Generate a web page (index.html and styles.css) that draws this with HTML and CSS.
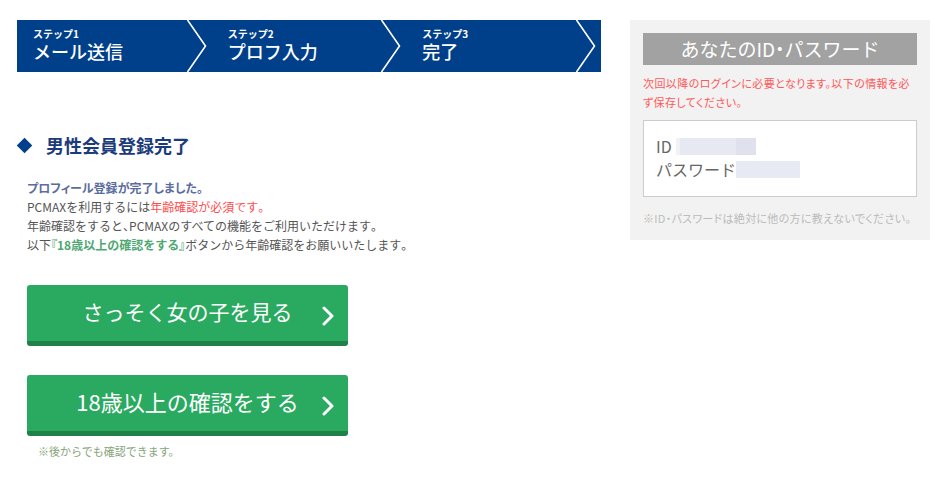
FILE: index.html
```html
<!DOCTYPE html>
<html lang="ja">
<head>
<meta charset="utf-8">
<title>男性会員登録完了</title>
<link rel="stylesheet" href="styles.css">
</head>
<body>
<div class="page">
  <main class="main">
    <ol class="steps">
      <li class="step">
        <div class="step-text"><span class="step-num">ステップ1</span><span class="step-name">メール送信</span></div>
        <svg class="chev" width="22" height="52" viewBox="0 0 22 52"><polyline points="0.5,0 18.5,26 0.5,52" fill="none" stroke="#fff" stroke-width="1.6"/></svg>
      </li>
      <li class="step">
        <div class="step-text"><span class="step-num">ステップ2</span><span class="step-name">プロフ入力</span></div>
        <svg class="chev" width="22" height="52" viewBox="0 0 22 52"><polyline points="0.5,0 18.5,26 0.5,52" fill="none" stroke="#fff" stroke-width="1.6"/></svg>
      </li>
      <li class="step">
        <div class="step-text"><span class="step-num">ステップ3</span><span class="step-name">完了</span></div>
        <svg class="chev" width="22" height="52" viewBox="0 0 22 52"><polyline points="0.5,0 18.5,26 0.5,52" fill="none" stroke="#fff" stroke-width="1.6"/></svg>
      </li>
    </ol>

    <h1 class="title"><span class="diamond"></span>男性会員登録完了</h1>

    <div class="msg">
      <p class="msg-line msg-lead">プロフィール登録が完了しました。</p>
      <p class="msg-line">PCMAXを利用するには<span class="red">年齢確認が必須です<span class="p">。</span></span></p>
      <p class="msg-line">年齢確認をすると<span class="p">、</span>PCMAXのすべての機能をご利用いただけます<span class="p">。</span></p>
      <p class="msg-line">以下<span class="green"><span class="p">『</span>18歳以上の確認をする<span class="p">』</span></span>ボタンから年齢確認をお願いいたします<span class="p">。</span></p>
    </div>

    <div class="buttons">
      <a class="btn" href="#">さっそく女の子を見る<svg class="btn-arrow" width="12" height="20" viewBox="0 0 12 20"><polyline points="2,2 10,10 2,18" fill="none" stroke="#fff" stroke-width="3" stroke-linecap="round" stroke-linejoin="round"/></svg></a>
      <a class="btn btn-wide" href="#">18歳以上の確認をする<svg class="btn-arrow" width="12" height="20" viewBox="0 0 12 20"><polyline points="2,2 10,10 2,18" fill="none" stroke="#fff" stroke-width="3" stroke-linecap="round" stroke-linejoin="round"/></svg></a>
    </div>
    <p class="later">※後からでも確認できます。</p>
  </main>

  <aside class="side">
    <h2 class="side-title">あなたのID<span class="p">・</span>パスワード</h2>
    <p class="side-warn">次回以降のログインに必要となります。以下の情報を必ず保存してください。</p>
    <div class="cred">
      <div class="cred-row">ID<span class="mask mask-id"></span></div>
      <div class="cred-row">パスワード<span class="mask mask-pw"></span></div>
    </div>
    <p class="side-note">※ID・パスワードは絶対に他の方に教えないでください。</p>
  </aside>
</div>
</body>
</html>
```

FILE: styles.css
```css
* { box-sizing: border-box; }
html, body { margin: 0; padding: 0; background: #fff; }
body {
  font-family: "Noto Sans CJK JP", "Noto Sans", sans-serif;
  color: #555;
}
p, h1, h2, ol { margin: 0; padding: 0; }

/* half-width punctuation */
.p { font-feature-settings: "palt"; }

.page {
  display: flex;
  align-items: flex-start;
  gap: 29px;
  padding: 20px 0 0 17px;
}

.main { width: 584px; }

/* steps */
.steps {
  list-style: none;
  display: flex;
  height: 52px;
  background: #003f8a;
}
.step {
  flex: 1 1 0;
  display: flex;
  justify-content: space-between;
  padding-left: 16px;
  padding-right: 3px;
}
.step-text {
  display: flex;
  flex-direction: column;
  gap: 1px;
  padding-top: 8px;
  color: #fff;
}
.step-num {
  font-size: 10px;
  line-height: 12px;
  font-weight: 700;
}
.step-name {
  font-size: 18px;
  line-height: 21px;
  font-weight: 500;
}
.chev { display: block; }

/* title */
.title {
  display: flex;
  align-items: center;
  margin-top: 61px;
  font-size: 18px;
  line-height: 24px;
  font-weight: 700;
  color: #1b3b7a;
}
.diamond {
  width: 11px;
  height: 11px;
  background: #003f8a;
  transform: rotate(45deg);
  margin: 0 16px 0 2px;
}

/* message */
.msg {
  margin-top: 21px;
  padding-left: 10px;
  font-size: 12px;
  line-height: 19px;
}
.msg-lead { color: #5b6d9e; font-weight: 700; font-feature-settings: "palt"; }
.red { color: #ff4c4c; }
.green { color: #4fa873; font-weight: 700; }

/* buttons */
.buttons {
  display: flex;
  flex-direction: column;
  gap: 29px;
  margin-top: 31px;
  padding-left: 10px;
}
.btn {
  position: relative;
  display: flex;
  align-items: center;
  justify-content: center;
  width: 321px;
  height: 61px;
  padding-bottom: 4px;
  background: #2aaa60;
  border-bottom: 5px solid #1f8148;
  border-radius: 3px;
  color: #fff;
  font-size: 21px;
  text-decoration: none;
}
.btn-wide { font-size: 22px; }
.btn-arrow {
  position: absolute;
  right: 14px;
  top: 21px;
}

.later {
  margin-top: 8px;
  padding-left: 21px;
  font-size: 11px;
  line-height: 14px;
  color: #86a47a;
}

/* side */
.side {
  width: 300px;
  background: #f2f2f2;
  padding: 13px 13px 14px;
}
.side-title {
  height: 32px;
  background: #a2a2a2;
  color: #fff;
  font-size: 19px;
  line-height: 32px;
  font-weight: 400;
  text-align: center;
}
.side-warn {
  margin-top: 9px;
  font-size: 11px;
  line-height: 19px;
  letter-spacing: 0.4px;
  color: #ff5757;
  font-feature-settings: "palt";
}
.cred {
  margin-top: 8px;
  background: #fff;
  border: 1px solid #cccccc;
  padding: 14px 12px 15px;
}
.cred-row {
  display: flex;
  align-items: center;
  font-size: 16px;
  line-height: 23px;
  color: #666;
}
.mask {
  display: inline-block;
  height: 17px;
}
.mask-id {
  width: 80px;
  margin-left: 4px;
  background: linear-gradient(90deg, #f2f2f5 0 4px, #e6e8f2 4px 60px, #dfe1ec 60px);
}
.mask-pw {
  width: 64px;
  background: #e8eaf3;
}
.side-note {
  margin-top: 13px;
  font-size: 11px;
  line-height: 16px;
  letter-spacing: 0.3px;
  color: #bbbbbb;
  font-feature-settings: "palt";
}
```
